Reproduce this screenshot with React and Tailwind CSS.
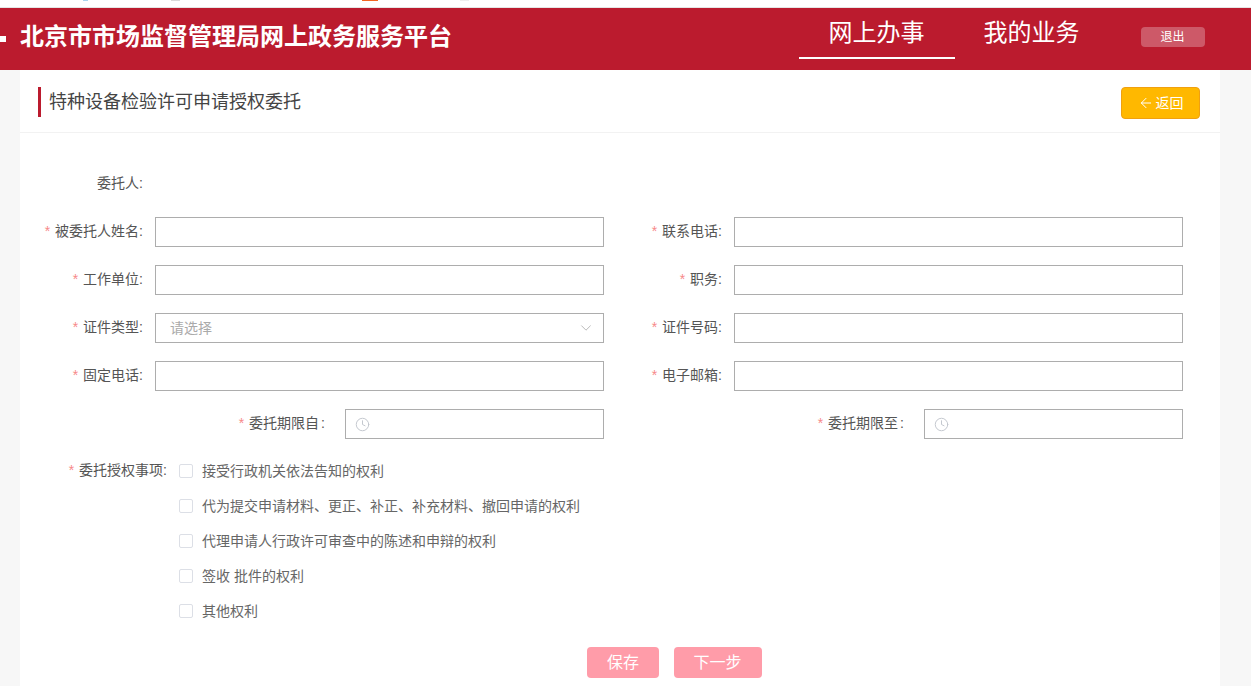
import React from 'react';
import { ArrowLeft, ChevronDown, Clock } from 'lucide-react';

const FONT = 'font-["Liberation_Sans","Noto_Sans_CJK_SC",sans-serif]';

function Label({ text, className = '' }) {
    return (
        <label className={`shrink-0 text-right text-sm leading-[28px] text-[#555] ${className}`}>
            <span className="mr-[5px] text-[#f78989]">*</span>{text}:
        </label>
    );
}

function Field({ label, right, children }) {
    return (
        <div className="flex h-[30px]">
            <Label text={label} className={right ? 'w-[118px]' : 'w-[123px]'} />
            <div className="ml-3 w-[449px]">{children}</div>
        </div>
    );
}

function TextInput() {
    return <input className="block h-[30px] w-full border border-[#adadad] bg-white px-3 text-sm outline-none" />;
}

function DateField({ label }) {
    return (
        <div className="flex h-[30px] justify-end">
            <label className="mr-5 text-sm leading-[28px] text-[#555]">
                <span className="mr-[5px] text-[#f78989]">*</span>{label}
                <span className="ml-[2px]">:</span>
            </label>
            <div className="flex h-[30px] w-[259px] items-center border border-[#adadad] pl-[9px]">
                <Clock size={15} strokeWidth={1.5} className="text-[#c0c4cc]" />
            </div>
        </div>
    );
}

const rights = [
    '接受行政机关依法告知的权利',
    '代为提交申请材料、更正、补正、补充材料、撤回申请的权利',
    '代理申请人行政许可审查中的陈述和申辩的权利',
    '签收 批件的权利',
    '其他权利',
];

export default function App() {
    return (
        <div className={`h-[686px] overflow-hidden bg-[#f7f7f7] ${FONT}`}>
            {/* top strip: the page above was cut off, only the bottoms of its icons show */}
            <div className="relative h-[8px] border-b border-[#e5e5e5] bg-white">
                <div className="absolute left-[83px] top-0 h-[1px] w-[5px] bg-[#a9d4ee]" />
                <div className="absolute left-[171px] top-0 h-[1px] w-[9px] bg-[#d9d9d9]" />
                <div className="absolute left-[362px] top-0 h-[1px] w-4 bg-[#f26522]" />
                <div className="absolute left-[460px] top-0 h-[1px] w-[9px] bg-[#eeeeee]" />
            </div>

            <header className="flex h-[62px] items-center bg-[#bb1b2e] text-white">
                <span className="h-[6px] w-[6px] bg-white" />
                <h1 className="ml-[14px] -translate-y-[2px] text-2xl font-bold">北京市市场监督管理局网上政务服务平台</h1>
                <nav className="ml-[347px] flex h-full">
                    <a className="h-[51px] w-[156px] border-b-2 border-white pr-[1px] pt-[10px] text-center text-2xl leading-[30px]">网上办事</a>
                    <a className="w-[154px] pr-[1px] pt-[10px] text-center text-2xl leading-[30px]">我的业务</a>
                </nav>
                <button className="ml-[32px] h-5 w-16 -translate-y-[2px] rounded bg-[#cd5968] pr-[1px] text-xs text-white">退出</button>
            </header>

            <main className="ml-5 h-[616px] w-[1200px] bg-white">
                <div className="flex h-[63px] items-start justify-between border-b border-[#f2f2f2] pl-[18px] pr-5 pt-[17px]">
                    <h2 className="h-[30px] border-l-[3px] border-[#bb1b2e] pl-2 text-lg leading-[31px] text-[#444]">特种设备检验许可申请授权委托</h2>
                    <button className="flex h-8 w-[79px] items-center justify-center gap-[2px] rounded border border-[#f0a010] bg-[#ffb800] text-sm text-white">
                        <ArrowLeft size={16} strokeWidth={1.5} />
                        返回
                    </button>
                </div>

                <div className="flex flex-col pt-[36px]">
                    <div className="w-[123px] text-right text-sm leading-[28px] text-[#555]">委托人:</div>

                    <div className="mt-5 flex flex-col gap-[18px]">
                        <div className="grid grid-cols-[584px_579px]">
                            <Field label="被委托人姓名"><TextInput /></Field>
                            <Field right label="联系电话"><TextInput /></Field>
                        </div>
                        <div className="grid grid-cols-[584px_579px]">
                            <Field label="工作单位"><TextInput /></Field>
                            <Field right label="职务"><TextInput /></Field>
                        </div>
                        <div className="grid grid-cols-[584px_579px]">
                            <Field label="证件类型">
                                <div className="flex h-[30px] items-center justify-between border border-[#adadad] pl-[14px] pr-[10px] text-sm text-[#aaa]">
                                    请选择
                                    <ChevronDown size={14} strokeWidth={1.25} className="scale-125 text-[#b4b4b4]" />
                                </div>
                            </Field>
                            <Field right label="证件号码"><TextInput /></Field>
                        </div>
                        <div className="grid grid-cols-[584px_579px]">
                            <Field label="固定电话"><TextInput /></Field>
                            <Field right label="电子邮箱"><TextInput /></Field>
                        </div>
                        <div className="grid grid-cols-[584px_579px]">
                            <DateField label="委托期限自" />
                            <DateField label="委托期限至" />
                        </div>
                    </div>

                    <div className="mt-[14px] flex">
                        <div className="w-[147px] text-right text-sm leading-[35px] text-[#555]">
                            <span className="mr-[5px] text-[#f78989]">*</span>委托授权事项:
                        </div>
                        <div className="ml-3 flex flex-col">
                            {rights.map((text) => (
                                <div key={text} className="flex h-[35px] items-center text-sm text-[#666]">
                                    <span className="mr-[9px] h-[14px] w-[14px] rounded-[2px] border border-[#dcdfe6] bg-white" />
                                    {text}
                                </div>
                            ))}
                        </div>
                    </div>

                    <div className="ml-[567px] mt-[19px] flex gap-[15px]">
                        <button className="h-[31px] w-[72px] rounded bg-[#ff9ca9] text-base text-white">保存</button>
                        <button className="h-[31px] w-[88px] rounded bg-[#ff9ca9] pr-[1px] text-base text-white">下一步</button>
                    </div>
                </div>
            </main>
        </div>
    );
}
